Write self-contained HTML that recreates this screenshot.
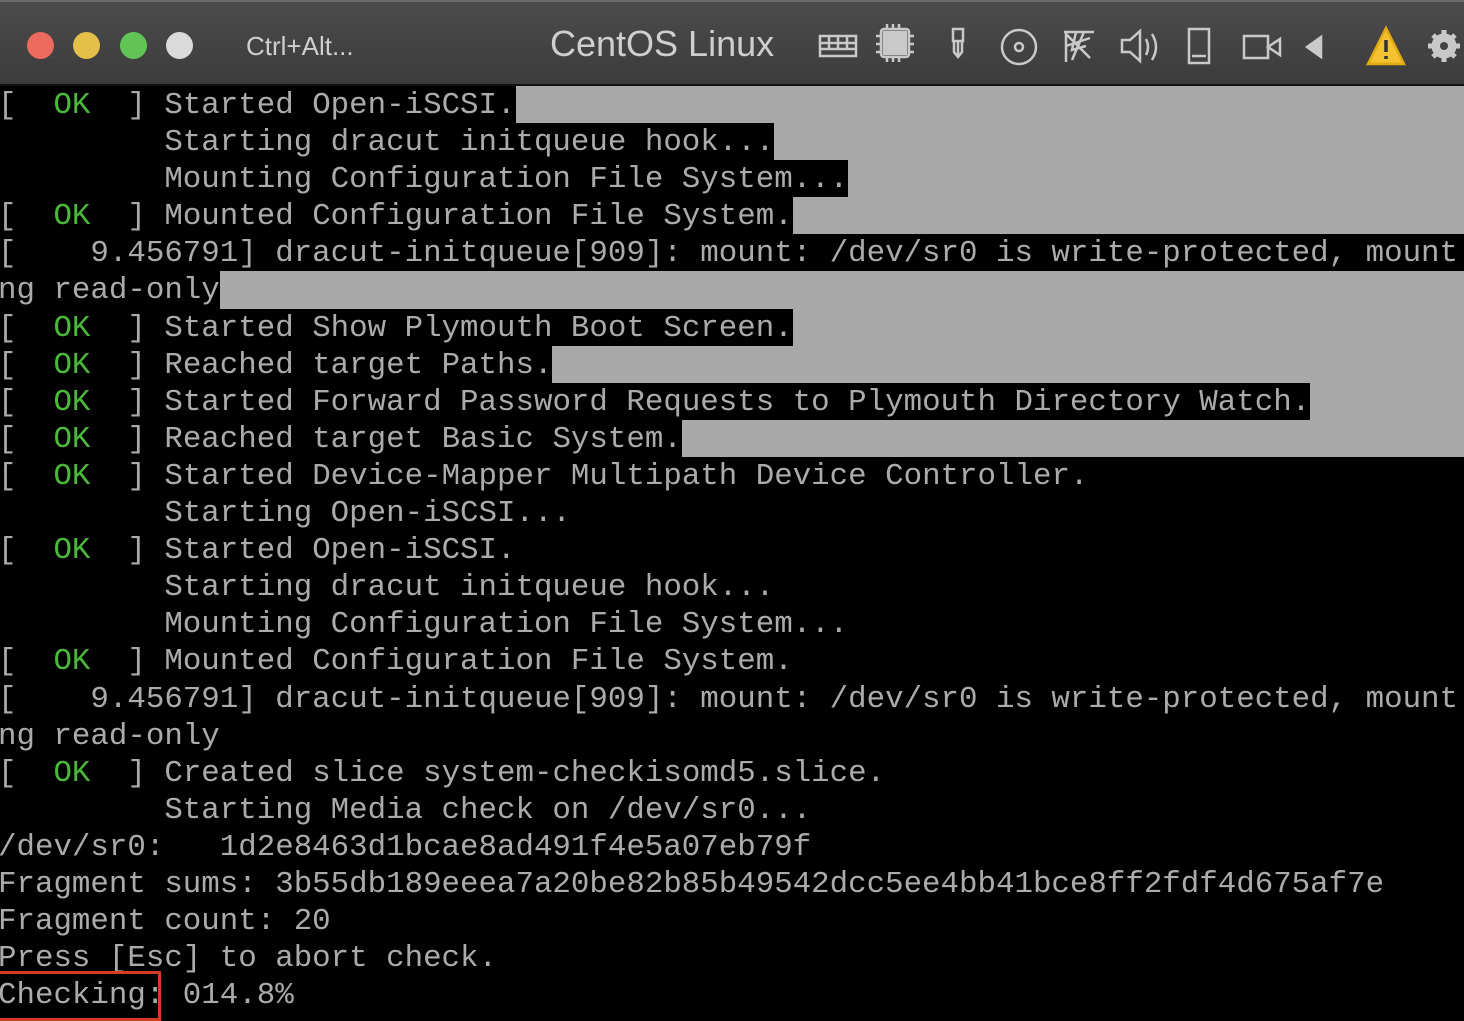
<!DOCTYPE html>
<html><head><meta charset="utf-8"><style>
*{margin:0;padding:0;box-sizing:border-box}
body{width:1464px;height:1006px;overflow:hidden;background:#000;position:relative;font-family:"Liberation Sans",sans-serif}
#bar{position:absolute;left:0;top:0;width:1464px;height:86px;background:linear-gradient(#4b4b4b,#3c3c3c);border-top:2px solid #6a6a6a;border-bottom:2px solid #111}
.dot{position:absolute;top:30px;width:27px;height:27px;border-radius:50%}
.t{position:absolute;color:#cfcfcf;white-space:nowrap}
#term{position:absolute;left:-2px;top:86px;width:1470px;font-family:"Liberation Mono",monospace;font-size:30.8px;color:#ababab}
.r{height:37.1px;line-height:39px;white-space:pre;overflow:hidden}
.g{background:#a9a9a9}
.g span.b{background:#000;display:inline-block;height:37.1px;vertical-align:top}
.k{color:#4cb83b}
svg{position:absolute}
</style></head><body>
<div id="bar">
<div class="dot" style="left:27px;background:#ec6a5e"></div>
<div class="dot" style="left:73px;background:#e4c04b"></div>
<div class="dot" style="left:120px;background:#61c454"></div>
<div class="dot" style="left:166px;background:#dadada"></div>
<div class="t" style="left:246px;top:29px;font-size:26px">Ctrl+Alt...</div>
<div class="t" style="left:550px;top:21px;font-size:36px">CentOS Linux</div>
<svg width="660" height="60" style="left:804px;top:14px" viewBox="0 0 660 60" fill="none" stroke="#c9c9c9" stroke-width="2.5">
<rect x="16" y="20" width="36" height="20"/><path d="M16 27h36M16 33h36M25 20v13M34 20v13M43 20v13"/>
<rect x="80" y="16" width="22" height="22" fill="#c9c9c9"/><rect x="77" y="13" width="28" height="28" rx="3"/><path d="M83 8v5M89 8v5M95 8v5M83 41v5M89 41v5M95 41v5M72 20h5M72 28h5M72 36h5M105 20h5M105 28h5M105 36h5"/>
<rect x="149" y="13" width="10" height="12"/><path d="M154 25v16M150 26v10l4 5 4-5v-10"/>
<circle cx="215" cy="31" r="17"/><circle cx="215" cy="31" r="4"/>
<path d="M260 16h30M262 16v30M262 18l24 24M272 16l-4 18 14-4M280 16l-12 28M262 30l24-8"/>
<path d="M318 24h8l10-9v30l-10-9h-8z M342 23q4 8 0 16M348 18q8 13 0 26"/>
<rect x="385" y="13" width="20" height="34"/><path d="M388 40h14"/>
<rect x="440" y="20" width="24" height="22"/><path d="M464 31l12-8v16z"/>
<path d="M517 21v20l-14-10z" fill="#c9c9c9"/>
<path d="M582 12l-18 36h36z" fill="#f2c230" stroke="#e0aa10"/><path d="M582 24v12M582 40v3" stroke="#333" stroke-width="3.5"/>
<circle cx="640" cy="30" r="9" stroke-width="7"/><path d="M640 14v32M624 30h32M629 19l22 22M651 19l-22 22" stroke-width="5"/><circle cx="640" cy="30" r="4" fill="#444" stroke="none"/>
</svg>
</div>
<div id="term">
<div class="r g"><span class="b">[  <span class="k">OK</span>  ] Started Open-iSCSI.</span></div>
<div class="r g"><span class="b">         Starting dracut initqueue hook...</span></div>
<div class="r g"><span class="b">         Mounting Configuration File System...</span></div>
<div class="r g"><span class="b">[  <span class="k">OK</span>  ] Mounted Configuration File System.</span></div>
<div class="r g"><span class="b">[    9.456791] dracut-initqueue[909]: mount: /dev/sr0 is write-protected, mount  </span></div>
<div class="r g"><span class="b">ng read-only</span></div>
<div class="r g"><span class="b">[  <span class="k">OK</span>  ] Started Show Plymouth Boot Screen.</span></div>
<div class="r g"><span class="b">[  <span class="k">OK</span>  ] Reached target Paths.</span></div>
<div class="r g"><span class="b">[  <span class="k">OK</span>  ] Started Forward Password Requests to Plymouth Directory Watch.</span></div>
<div class="r g"><span class="b">[  <span class="k">OK</span>  ] Reached target Basic System.</span></div>
<div class="r">[  <span class="k">OK</span>  ] Started Device-Mapper Multipath Device Controller.</div>
<div class="r">         Starting Open-iSCSI...</div>
<div class="r">[  <span class="k">OK</span>  ] Started Open-iSCSI.</div>
<div class="r">         Starting dracut initqueue hook...</div>
<div class="r">         Mounting Configuration File System...</div>
<div class="r">[  <span class="k">OK</span>  ] Mounted Configuration File System.</div>
<div class="r">[    9.456791] dracut-initqueue[909]: mount: /dev/sr0 is write-protected, mount</div>
<div class="r">ng read-only</div>
<div class="r">[  <span class="k">OK</span>  ] Created slice system-checkisomd5.slice.</div>
<div class="r">         Starting Media check on /dev/sr0...</div>
<div class="r">/dev/sr0:   1d2e8463d1bcae8ad491f4e5a07eb79f</div>
<div class="r">Fragment sums: 3b55db189eeea7a20be82b85b49542dcc5ee4bb41bce8ff2fdf4d675af7e</div>
<div class="r">Fragment count: 20</div>
<div class="r">Press [Esc] to abort check.</div>
<div class="r">Checking: 014.8%</div>
</div>
<div style="position:absolute;left:-3px;top:971px;width:164px;height:50px;border:3px solid #d33b22"></div>
</body></html>
